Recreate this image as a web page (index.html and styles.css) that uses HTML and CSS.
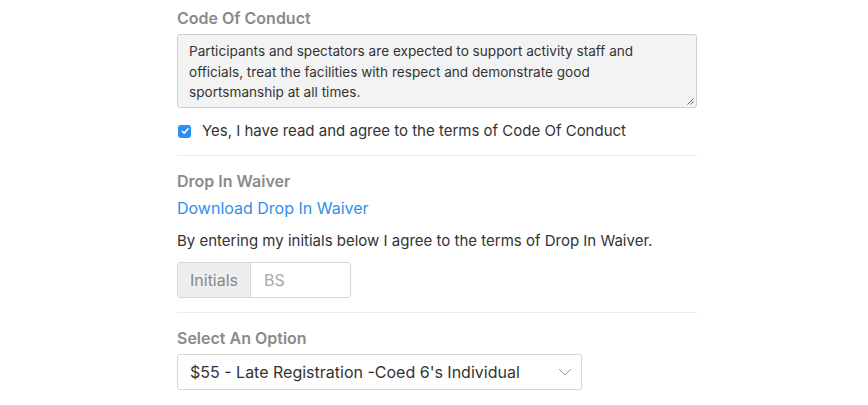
FILE: index.html
```html
<!DOCTYPE html>
<html>
<head>
<meta charset="utf-8">
<link rel="stylesheet" href="styles.css">
</head>
<body>
<div class="form">
  <section class="group">
    <h3 class="label">Code Of Conduct</h3>
    <div class="terms">Participants and spectators are expected to support activity staff and officials, treat the facilities with respect and demonstrate good sportsmanship at all times.<svg class="grip" width="8" height="8" viewBox="0 0 8 8"><path d="M7.5 1.5 L1.5 7.5 M7.5 4.5 L4.5 7.5" stroke="#666" stroke-width="1" fill="none"/></svg></div>
    <label class="check">
      <span class="box"><svg width="10" height="10" viewBox="0 0 10 10"><path d="M2.2 5.2 L4.2 7.2 L8 2.8" stroke="#fff" stroke-width="1.5" fill="none" stroke-linecap="round" stroke-linejoin="round"/></svg></span>
      <span>Yes, I have read and agree to the terms of Code Of Conduct</span>
    </label>
  </section>
  <hr class="divider">
  <section class="group">
    <h3 class="label">Drop In Waiver</h3>
    <a class="link" href="#">Download Drop In Waiver</a>
    <p class="note">By entering my initials below I agree to the terms of Drop In Waiver.</p>
    <div class="input-group">
      <span class="addon">Initials</span>
      <span class="field">BS</span>
    </div>
  </section>
  <hr class="divider divider-tight">
  <section class="group">
    <h3 class="label">Select An Option</h3>
    <div class="select">
      <span>$55 - Late Registration -Coed 6's Individual</span>
      <svg width="14" height="8" viewBox="0 0 14 8"><path d="M1 1 L7 7 L13 1" stroke="#999" stroke-width="1" fill="none"/></svg>
    </div>
  </section>
</div>
</body>
</html>
```
FILE: styles.css
```css
html, body {
  margin: 0;
  padding: 0;
  background: #fff;
}
body {
  font-family: Inter, "Noto Sans", "Liberation Sans", sans-serif;
  color: #333;
}
.form {
  margin-left: 177px;
  width: 520px;
  padding-top: 7px;
}
.group {
  display: flex;
  flex-direction: column;
  align-items: flex-start;
}
.label {
  margin: 0;
  font-size: 16px;
  line-height: 22px;
  font-weight: 600;
  color: #8a8a8a;
}
.terms {
  position: relative;
  box-sizing: border-box;
  margin-top: 5px;
  width: 520px;
  height: 74px;
  padding: 6px 11px;
  background: #f3f3f3;
  border: 1px solid #d0d0d0;
  border-radius: 3px;
  font-size: 13.6px;
  line-height: 20.5px;
  color: #333;
}
.grip {
  position: absolute;
  right: 2px;
  bottom: 2px;
}
.check {
  display: flex;
  align-items: center;
  gap: 11px;
  margin-top: 14px;
  margin-left: 1px;
  font-size: 15px;
  line-height: 18px;
  color: #333;
}
.box {
  display: flex;
  align-items: center;
  justify-content: center;
  width: 13px;
  height: 13px;
  border-radius: 3px;
  background: #2e8ff0;
}
.divider {
  margin: 15px 0 0;
  border: 0;
  border-top: 1px solid #ececec;
  height: 0;
}
.divider + .group {
  padding-top: 14px;
}
.link {
  margin-top: 5px;
  font-size: 16px;
  line-height: 22px;
  color: #2e8ff0;
  text-decoration: none;
}
.note {
  margin: 12px 0 0;
  font-size: 15px;
  line-height: 20px;
  color: #333;
}
.input-group {
  display: flex;
  margin-top: 11px;
  width: 174px;
  height: 36px;
  box-sizing: border-box;
  border: 1px solid #d6d6d6;
  border-radius: 3px;
  overflow: hidden;
  font-size: 16px;
}
.addon {
  display: flex;
  align-items: center;
  padding: 0 12px;
  width: 73px;
  box-sizing: border-box;
  background: #eeeeee;
  border-right: 1px solid #d6d6d6;
  color: #888;
}
.field {
  display: flex;
  align-items: center;
  flex: 1;
  padding: 0 13px;
  box-sizing: border-box;
  color: #aaa;
}
.divider-tight {
  margin-top: 14px;
}
.select {
  display: flex;
  align-items: center;
  justify-content: space-between;
  box-sizing: border-box;
  margin-top: 5px;
  width: 405px;
  height: 36px;
  padding: 0 9px 0 12px;
  border: 1px solid #d6d6d6;
  border-radius: 3px;
  font-size: 16px;
  color: #333;
}
```
